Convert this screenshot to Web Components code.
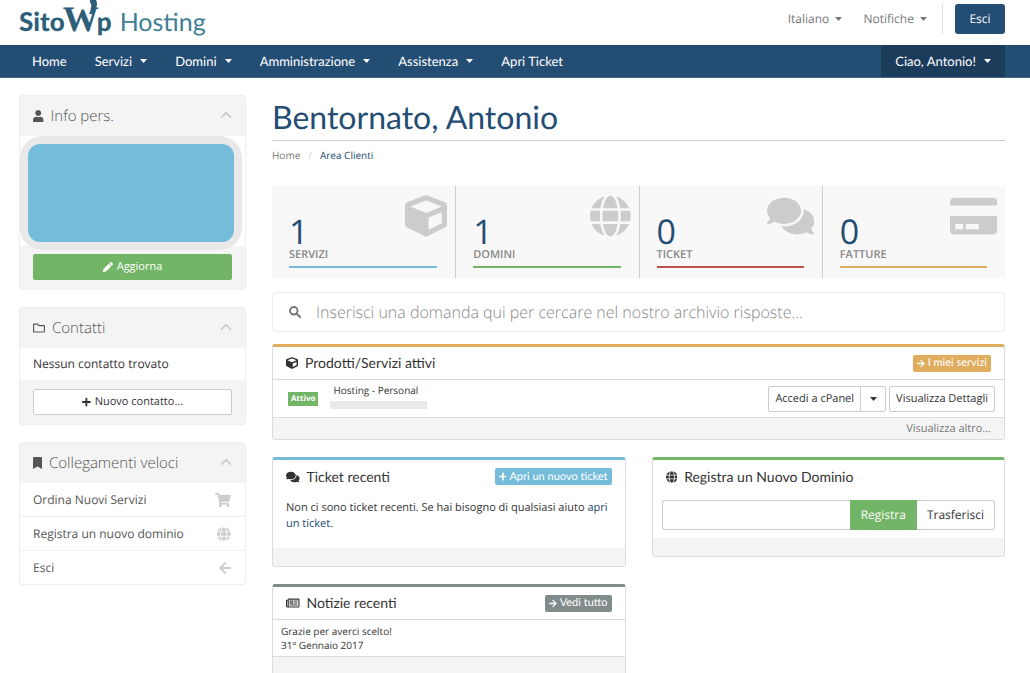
<!DOCTYPE html>
<html lang="it">
<head>
<meta charset="utf-8">
<meta name="viewport" content="width=device-width, initial-scale=1">
<title>Area Clienti - SitoWp Hosting</title>
<style>
  :root {
    --navy: #244d74; --green: #72b566; --blue: #75bcda; --gold: #e0ad5f; --grey: #818b8b;
    --line: #dcdcdc; --soft: #f4f4f4; --heading: Lato, "Open Sans", sans-serif;
  }
  html { overflow-x: hidden; }
  body { margin: 0; background: #fff; color: #333; font: 12px/16px "Open Sans", "Noto Sans", sans-serif; text-rendering: geometricPrecision; }
</style>
</head>
<body>
<client-area></client-area>
<script>
const define = (name, html, setup) => {
  const template = document.createElement('template');
  template.innerHTML = '<style>*{box-sizing:border-box}a{color:inherit;text-decoration:none}button,input{font:inherit;color:inherit;margin:0;text-rendering:inherit}button{cursor:pointer}:host{display:block}</style>' + html;
  customElements.define(name, class extends HTMLElement {
    constructor() {
      super();
      this.attachShadow({ mode: 'open' }).append(template.content.cloneNode(true));
    }
    connectedCallback() { if (setup) setup(this, this.shadowRoot); }
  });
};

const fillHeading = (host, root) => {
  root.querySelector('h2').textContent = host.getAttribute('heading');
  const icon = document.createElement('ui-icon');
  icon.setAttribute('name', host.getAttribute('icon'));
  root.querySelector('.lead').replaceChildren(icon);
};

const icons = {
  user: ['448 512', '<path d="M224 256c70.700 0 128-57.300 128-128S294.700 0 224 0 96 57.300 96 128s57.300 128 128 128zm89.600 32h-16.700c-22.200 10.200-46.900 16-72.900 16s-50.600-5.800-72.900-16h-16.700C60.200 288 0 348.200 0 422.400V464c0 26.500 21.500 48 48 48h352c26.500 0 48-21.500 48-48v-41.600c0-74.200-60.200-134.400-134.400-134.400z"/>'],
  globe: ['496 512', '<path d="M336.5 160C322 70.7 287.8 8 248 8s-74 62.700-88.500 152h177zM152 256c0 22.200 1.200 43.500 3.300 64h185.300c2.100-20.500 3.300-41.800 3.300-64s-1.200-43.500-3.300-64H155.300c-2.100 20.500-3.300 41.800-3.300 64zm324.700-96c-28.600-67.900-86.500-120.400-158-141.600 24.400 33.800 41.200 84.700 50 141.600h108zM177.200 18.400C105.800 39.600 47.800 92.100 19.300 160h108c8.700-56.900 25.500-107.800 49.900-141.600zM487.400 192H372.700c2.100 21 3.300 42.500 3.300 64s-1.200 43-3.300 64h114.600c5.500-20.500 8.600-41.800 8.600-64s-3.100-43.500-8.500-64zM120 256c0-21.500 1.200-43 3.300-64H8.600C3.200 212.500 0 233.800 0 256s3.200 43.500 8.600 64h114.600c-2-21-3.200-42.500-3.200-64zm39.500 96c14.500 89.300 48.700 152 88.500 152s74-62.700 88.500-152h-177zm159.300 141.600c71.400-21.200 129.400-73.700 158-141.600h-108c-8.800 56.900-25.600 107.800-50 141.600zM19.300 352c28.600 67.900 86.500 120.400 158 141.600-24.400-33.800-41.200-84.700-50-141.600h-108z"/>'],
  cube: ['512 512', '<path d="M239.1 6.300l-208 78c-18.700 7-31.100 25-31.100 45v225.100c0 18.200 10.300 34.800 26.500 42.900l208 104c13.500 6.800 29.400 6.800 42.900 0l208-104c16.300-8.100 26.500-24.800 26.500-42.900V129.300c0-20-12.400-37.900-31.100-44.900l-208-78C262 2.200 250 2.200 239.100 6.300zM256 68.400l192 72v1.100l-192 78-192-78v-1.100l192-72zm32 356V275.500l160-65v133.900l-160 80z"/>'],
  comments: ['576 512', '<path d="M416 192c0-88.400-93.100-160-208-160S0 103.600 0 192c0 34.300 14.100 65.900 38 92-13.400 30.200-35.500 54.200-35.800 54.500-2.200 2.300-2.800 5.700-1.500 8.700S4.800 352 8 352c36.600 0 66.900-12.300 88.700-25 32.200 15.700 70.300 25 111.300 25 114.900 0 208-71.600 208-160zm122 220c23.900-26 38-57.700 38-92 0-66.900-53.500-124.200-129.300-148.100.9 6.600 1.300 13.300 1.300 20.100 0 105.900-107.700 192-240 192-10.800 0-21.300-.8-31.700-1.900C207.800 439.600 281.800 480 368 480c41 0 79.100-9.200 111.300-25 21.800 12.700 52.100 25 88.700 25 3.200 0 6.100-1.900 7.300-4.800 1.300-2.900.7-6.300-1.500-8.700-.3-.3-22.400-24.200-35.800-54.500z"/>'],
  card: ['576 512', '<path d="M0 432c0 26.500 21.500 48 48 48h480c26.500 0 48-21.500 48-48V256H0v176zm192-68c0-6.600 5.400-12 12-12h136c6.600 0 12 5.400 12 12v40c0 6.600-5.400 12-12 12H204c-6.600 0-12-5.400-12-12v-40zm-128 0c0-6.600 5.400-12 12-12h72c6.600 0 12 5.400 12 12v40c0 6.600-5.400 12-12 12H76c-6.600 0-12-5.400-12-12v-40zM576 80v48H0V80c0-26.500 21.500-48 48-48h480c26.500 0 48 21.500 48 48z"/>'],
  bookmark: ['384 512', '<path d="M0 512V48C0 21.500 21.500 0 48 0h288c26.500 0 48 21.500 48 48v464L192 400 0 512z"/>'],
  folder: ['512 512', '<path d="M464 128H272l-54.600-54.600c-6-6-14.100-9.400-22.600-9.400H48C21.500 64 0 85.500 0 112v288c0 26.500 21.500 48 48 48h416c26.500 0 48-21.500 48-48V176c0-26.500-21.500-48-48-48zm0 272H48V112h140.100l54.600 54.600c6 6 14.100 9.400 22.600 9.400H464v224z"/>'],
  plus: ['448 512', '<path d="M416 208H272V64c0-17.700-14.300-32-32-32h-32c-17.700 0-32 14.300-32 32v144H32c-17.700 0-32 14.300-32 32v32c0 17.700 14.300 32 32 32h144v144c0 17.700 14.300 32 32 32h32c17.700 0 32-14.300 32-32V304h144c17.700 0 32-14.300 32-32v-32c0-17.700-14.300-32-32-32z"/>'],
  pencil: ['512 512', '<path d="M497.9 142.100l-46.100 46.100c-4.700 4.700-12.300 4.700-17 0l-111-111c-4.700-4.700-4.700-12.300 0-17l46.100-46.100c18.700-18.700 49.100-18.700 67.900 0l60.100 60.100c18.800 18.700 18.800 49.100 0 67.900zM284.200 99.800L21.600 362.400.4 483.900c-2.900 16.400 11.400 30.600 27.800 27.800l121.500-21.300 262.600-262.600c4.700-4.700 4.700-12.300 0-17l-111-111c-4.800-4.700-12.400-4.700-17.100 0z"/>'],
  cart: ['576 512', '<path d="M528.1 301.300l47.300-208C578.800 78.300 567.400 64 552 64H159.200l-9.200-44.800C147.800 8 137.900 0 126.500 0H24C10.700 0 0 10.700 0 24v16c0 13.300 10.700 24 24 24h69.900l70.200 343.400C147.300 417.100 136 435.200 136 456c0 30.900 25.100 56 56 56s56-25.100 56-56c0-15.700-6.400-29.800-16.800-40h209.600C430.400 426.200 424 440.300 424 456c0 30.900 25.100 56 56 56s56-25.100 56-56c0-22.200-12.900-41.300-31.600-50.400l5.500-24.300c3.400-15-8-29.300-23.400-29.300H218.100l-6.500-32h293.100c11.200 0 20.900-7.800 23.400-18.700z"/>'],
  news: ['576 512', '<path fill-rule="evenodd" d="M120 64h408q48 0 48 48v288q0 48-48 48H64Q0 448 0 384V152q0-40 40-40h32q0-48 48-48zm0 48v288h408V112zM72 160H48v224q0 16 12 16t12-16zM160 152h152v136H160zm40 40v56h72v-56zM344 152h144v40H344zm0 80h144v40H344zM160 320h328v40H160z"/>'],
  search: ['512 512', '<circle cx="205" cy="205" r="160" fill="none" stroke="currentColor" stroke-width="82"/><path d="M325 325l145 145" stroke="currentColor" stroke-width="86" stroke-linecap="round"/>'],
  right: ['448 512', '<path d="M40 256h350M225 80l175 176-175 176" fill="none" stroke="currentColor" stroke-width="72" stroke-linecap="round"/>'],
  left: ['448 512', '<path d="M408 256H58M223 80L48 256l175 176" fill="none" stroke="currentColor" stroke-width="66" stroke-linecap="round"/>'],
  up: ['512 512', '<path d="M48 328L256 120l208 208" fill="none" stroke="currentColor" stroke-width="72"/>'],
  caret: ['512 288', '<path d="M0 0h512L256 288z"/>']
};

define('ui-icon', '<style>:host{display:inline-flex;flex:none;height:12px}svg{height:100%;width:auto;fill:currentColor;display:block}</style>', (host, root) => {
  if (root.querySelector('svg')) return;
  const [size, body] = icons[host.getAttribute('name')];
  const holder = document.createElement('template');
  holder.innerHTML = `<svg viewBox="0 0 ${size}" aria-hidden="true">${body}</svg>`;
  root.append(holder.content);
});

define('site-logo', `<style>
  a{display:flex;align-items:baseline;color:#2d6078;font:26px/38px Lato,sans-serif}
  b{font-weight:900}
  .w{position:relative;margin:0 -2px;font:bold 36px/38px "Liberation Serif",serif}
  svg{position:absolute;right:1px;top:0;width:9px;height:14px}
  .h{margin-left:8px;color:#3f7f96;font-size:25px}
</style><a href="#"><b>Sito</b><span class="w">W<svg viewBox="0 0 9 14" aria-hidden="true"><path d="M1 0h6Q10 5 4 14H0Q4 6 1 2z" fill="#2d6078"/></svg></span><b>p</b><span class="h">Hosting</span></a>`);

define('top-bar', `<style>
  header{display:flex;justify-content:space-between;height:45px;padding:0 25px 0 19px}
  .tools{display:flex;align-items:center;gap:21px;height:38px;color:#777}
  .menu{display:flex;align-items:center;gap:6px;border:0;background:none;padding:0}
  .menu ui-icon{height:4px}
  .out{border-left:1px solid #ddd;padding-left:12px;margin-left:-6px}
  .out button{width:50px;height:30px;border:0;border-radius:3px;background:var(--navy);color:#fff}
</style><header><site-logo></site-logo><div class="tools">
  <button class="menu">Italiano <ui-icon name="caret"></ui-icon></button>
  <button class="menu">Notifiche <ui-icon name="caret"></ui-icon></button>
  <div class="out"><button>Esci</button></div></div></header>`);

define('nav-item', `<style>a{display:flex;align-items:center;gap:8px;height:32px;padding:0 14px;color:#fff;font:13px/20px var(--heading);white-space:nowrap}
  ui-icon{height:4px}:host(:not([menu])) ui-icon{display:none}:host([current]){background:#1c3c5c}</style>
  <a href="#"><slot></slot><ui-icon name="caret"></ui-icon></a>`);

define('nav-bar', `<style>nav{display:flex;background:var(--navy);border-bottom:1px solid #426683;padding:0 25px 0 18px}
  .last{margin-left:auto}</style>
  <nav aria-label="Principale"><nav-item>Home</nav-item><nav-item menu>Servizi</nav-item><nav-item menu>Domini</nav-item><nav-item menu>Amministrazione</nav-item><nav-item menu>Assistenza</nav-item><nav-item>Apri Ticket</nav-item><nav-item class="last" menu current>Ciao, Antonio!</nav-item></nav>`);

define('side-panel', `<style>
  section{border:1px solid #eee;border-radius:3px;background:#fff}
  header{display:flex;align-items:center;gap:7px;height:40px;padding:0 13px;background:var(--soft);color:#555}
  .lead{display:flex}
  h2{flex:1;margin:0;font:300 15px/20px "Open Sans",sans-serif}
  .up{height:12px;color:#ccc}
  .foot{background:var(--soft)}
</style><section><header><span class="lead"></span><h2></h2><ui-icon class="up" name="up"></ui-icon></header><slot></slot><div class="foot"><slot name="foot"></slot></div></section>`, fillHeading);

define('quick-link', `<style>a{display:flex;align-items:center;justify-content:space-between;height:33px;box-sizing:content-box;padding:0 14px 0 13px;color:#555}
  :host(:not(:first-of-type)) a{border-top:1px solid #eee}::slotted(ui-icon){height:14px;color:#ccc}</style>
  <a href="#"><slot></slot><slot name="icon"></slot></a>`);

define('wide-button', `<style>button{display:flex;align-items:center;justify-content:center;gap:4px;width:100%;height:26px;border:1px solid #ccc;border-radius:2px;background:#fff;font-size:11px}
  :host([green]) button{background:var(--green);border-color:var(--green);color:#fff}::slotted(ui-icon){height:10px}</style><button><slot></slot></button>`);

define('side-bar', `<style>
  :host{display:grid;gap:17px;align-content:start}
  .card{position:relative;height:114px;margin:0 3px -4px 0;padding:8px;border-radius:22px;background:#e9e9ea}
  .card::before{content:"";display:block;height:100%;border-radius:12px;background:var(--blue)}
  .empty{margin:0;padding:8px 13px}
  wide-button{padding:9px 13px}
  wide-button[green]{padding-top:8px}
</style>
<side-panel icon="user" heading="Info pers."><div class="card"></div><wide-button slot="foot" green><ui-icon name="pencil"></ui-icon>Aggiorna</wide-button></side-panel>
<side-panel icon="folder" heading="Contatti"><p class="empty">Nessun contatto trovato</p><wide-button slot="foot"><ui-icon name="plus"></ui-icon>Nuovo contatto...</wide-button></side-panel>
<side-panel icon="bookmark" heading="Collegamenti veloci"><quick-link>Ordina Nuovi Servizi<ui-icon slot="icon" name="cart"></ui-icon></quick-link><quick-link>Registra un nuovo dominio<ui-icon slot="icon" name="globe"></ui-icon></quick-link><quick-link>Esci<ui-icon slot="icon" name="left"></ui-icon></quick-link></side-panel>`);

define('page-heading', `<style>
  h1{margin:0;padding-bottom:2px;border-bottom:1px solid #ccc;color:var(--navy);font:32px/43px var(--heading)}
  nav{display:flex;gap:8px;padding-top:6px;color:#777;font-size:10px}i{color:#ccc;font-style:normal}b{font-weight:400;color:var(--navy)}
</style><h1>Bentornato, Antonio</h1><nav aria-label="Percorso"><a href="#">Home</a><i>/</i><b>Area Clienti</b></nav>`);

define('stat-tile', `<style>
  :host{background:#f8f8f8}:host(:not(:first-of-type)){border-left:1px solid #ccc}
  a{display:grid;grid-template:1fr auto / 1fr auto;height:92px;padding:9px 8px 10px 17px;color:#888}
  strong{align-self:end;color:var(--navy);font:34px/26px "Open Sans",sans-serif}
  ::slotted(ui-icon){height:42px;color:#ccc}
  span{grid-column:1/3;margin-right:10px;border-bottom:2px solid var(--tone);font:600 11px/22px "Open Sans",sans-serif}
</style><a href="#"><strong></strong><slot></slot><span></span></a>`, (host, root) => {
  root.querySelector('strong').textContent = host.getAttribute('value');
  root.querySelector('span').textContent = host.getAttribute('label');
});

define('search-box', `<style>label{display:flex;align-items:center;gap:15px;height:40px;padding:0 16px;border:1px solid #eee;border-radius:4px;color:#777}
  input{flex:1;min-width:0;padding:0;border:0;outline:0;background:none;font:300 16px/24px "Open Sans",sans-serif}input::placeholder{color:#888;opacity:1}</style>
  <label><ui-icon name="search"></ui-icon><input type="search" aria-label="Cerca" placeholder="Inserisci una domanda qui per cercare nel nostro archivio risposte..."></label>`);

define('tag-button', `<style>button{display:flex;align-items:center;gap:3px;height:17px;padding:0 4px;border:0;border-radius:2px;background:var(--tone);color:#fff;font:11px/16px var(--heading)}::slotted(ui-icon){height:9px}</style><button><slot></slot></button>`);

define('home-panel', `<style>
  section{border:1px solid var(--line);border-top:3px solid var(--tone);border-radius:3px;background:#fff}
  header{display:flex;align-items:center;gap:7px;height:33px;padding:0 13px}
  .lead{display:flex}
  :host([ruled]) header{border-bottom:1px solid var(--line)}
  h2{flex:1;margin:0;font:14px/20px var(--heading)}
  footer{min-height:18px;background:var(--soft)}
  :host([ruled]) footer{min-height:22px;border-top:1px solid var(--line)}
</style><section><header><span class="lead"></span><h2></h2><slot name="action"></slot></header><slot></slot><footer><slot name="foot"></slot></footer></section>`, fillHeading);

define('service-row', `<style>
  :host{display:flex;align-items:center;height:37px;padding:0 9px 0 15px}
  .status{background:var(--green);color:#fff;font:bold 8px/14px "Open Sans",sans-serif;padding:0 3px;margin-right:12px}
  .name{flex:1;align-self:start;padding-top:3px;font-size:10px;line-height:14px}.name a{display:block;padding-left:3px}
  .host{display:block;width:97px;height:8px;margin-top:4px;background:#e9e9e9}
  button{height:26px;border:1px solid #ccc;background:#fff;padding:0 6px;font-size:11px}
  .first{border-radius:2px 0 0 2px}.more{border-radius:2px}
  .split{display:flex;align-items:center;justify-content:center;width:26px;margin:0 3px 0 -1px;border-radius:0 2px 2px 0}
  .split ui-icon{height:4px}
</style><span class="status">Attivo</span><div class="name"><a href="#">Hosting - Personal</a><span class="host"></span></div>
<button class="first">Accedi a cPanel</button><button class="split" aria-label="Altre azioni"><ui-icon name="caret"></ui-icon></button><button class="more">Visualizza Dettagli</button>`);

define('domain-form', `<style>form{display:flex;height:30px;padding:0 9px;margin:7px 0 8px}
  input{flex:1;min-width:0;border:1px solid #ccc;border-right:0;border-radius:3px 0 0 3px;padding:0 10px}
  button{border:1px solid #ccc;background:#fff;padding:0 10px}.go{background:var(--green);border-color:var(--green);color:#fff}.move{border-left:0;border-radius:0 3px 3px 0}</style>
  <form onsubmit="return false"><input type="text" aria-label="Nome dominio"><button class="go">Registra</button><button class="move" type="button">Trasferisci</button></form>`);

define('client-area', `<style>
  main{display:grid;grid-template-columns:minmax(0,227fr) minmax(0,733fr);gap:26px;padding:17px 25px 0 19px}
  .stats{display:grid;grid-template-columns:repeat(4,1fr);margin:23px 0 14px}
  .wide{margin:12px 0 17px}
  .pair{display:grid;grid-template-columns:1fr 1fr;gap:26px;align-items:start}
  .column{display:grid;gap:17px}
  .note{margin:0;padding:7px 13px 16px;font-size:11px}.note a{color:var(--navy)}
  .news{padding:4px 8px;font-size:10px;line-height:14px}
  .all{display:block;padding:3px 13px 2px;text-align:right;color:#777;font-size:11px}
  .blue{--tone:var(--blue)}.green{--tone:var(--green)}.red{--tone:#bd5250}.gold{--tone:var(--gold)}.grey{--tone:var(--grey)}
</style>
<top-bar></top-bar><nav-bar></nav-bar>
<main><side-bar></side-bar><div>
  <page-heading></page-heading>
  <div class="stats">
    <stat-tile class="blue" value="1" label="SERVIZI"><ui-icon name="cube"></ui-icon></stat-tile>
    <stat-tile class="green" value="1" label="DOMINI"><ui-icon name="globe"></ui-icon></stat-tile>
    <stat-tile class="red" value="0" label="TICKET"><ui-icon name="comments"></ui-icon></stat-tile>
    <stat-tile class="gold" value="0" label="FATTURE"><ui-icon name="card"></ui-icon></stat-tile>
  </div>
  <search-box></search-box>
  <home-panel class="wide gold" ruled icon="cube" heading="Prodotti/Servizi attivi"><tag-button slot="action"><ui-icon name="right"></ui-icon>I miei servizi</tag-button><service-row></service-row><a class="all" slot="foot" href="#">Visualizza altro...</a></home-panel>
  <div class="pair"><div class="column">
    <home-panel class="blue" icon="comments" heading="Ticket recenti"><tag-button slot="action"><ui-icon name="plus"></ui-icon>Apri un nuovo ticket</tag-button><p class="note">Non ci sono ticket recenti. Se hai bisogno di qualsiasi aiuto <a href="#">apri un ticket.</a></p></home-panel>
    <home-panel class="grey" ruled icon="news" heading="Notizie recenti"><tag-button slot="action"><ui-icon name="right"></ui-icon>Vedi tutto</tag-button><div class="news"><a href="#">Grazie per averci scelto!</a><br><span>31º Gennaio 2017</span></div></home-panel>
  </div>
  <home-panel class="green" icon="globe" heading="Registra un Nuovo Dominio"><domain-form></domain-form></home-panel></div>
</div></main>`);
</script>
</body>
</html>
